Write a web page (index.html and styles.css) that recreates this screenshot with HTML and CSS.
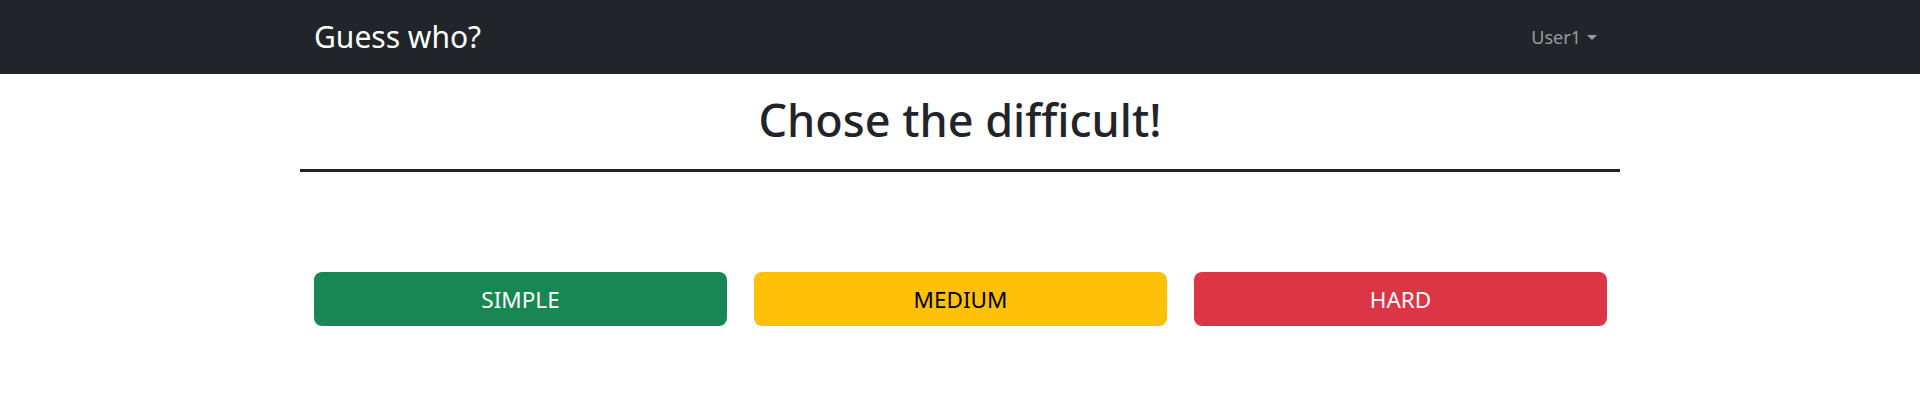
FILE: index.html
```html
<!DOCTYPE html>
<html lang="en">
<head>
<meta charset="utf-8">
<title>Guess who?</title>
<link rel="stylesheet" href="styles.css">
</head>
<body>
<nav class="navbar">
  <div class="nav-inner">
    <a class="brand" href="#">Guess who?</a>
    <a class="user" href="#">User1<span class="caret"></span></a>
  </div>
</nav>
<main class="main">
  <h1 class="title">Chose the difficult!</h1>
  <hr class="divider">
  <div class="levels">
    <div class="level"><button class="btn btn-simple">SIMPLE</button></div>
    <div class="level"><button class="btn btn-medium">MEDIUM</button></div>
    <div class="level"><button class="btn btn-hard">HARD</button></div>
  </div>
</main>
</body>
</html>
```
FILE: styles.css
```css
* { box-sizing: border-box; }
html, body { margin: 0; padding: 0; }
body {
  font-family: "Noto Sans", "Open Sans", sans-serif;
  background: #fff;
  color: #212529;
}
.navbar {
  background: #212529;
  height: 74px;
}
.nav-inner {
  width: 1320px;
  margin: 0 auto;
  height: 100%;
  padding: 0 14px;
  display: flex;
  align-items: center;
  justify-content: space-between;
}
.brand {
  color: #fff;
  text-decoration: none;
  font-size: 30px;
  line-height: 1;
}
.user {
  color: rgba(255,255,255,0.55);
  text-decoration: none;
  font-size: 18px;
  display: flex;
  align-items: center;
  margin-right: 9px;
}
.caret {
  display: inline-block;
  margin-left: 6px;
  border-top: 5px solid rgba(255,255,255,0.55);
  border-left: 5px solid transparent;
  border-right: 5px solid transparent;
}
.main {
  width: 1320px;
  margin: 0 auto;
}
.title {
  text-align: center;
  font-weight: 500;
  font-size: 45px;
  line-height: 1.2;
  margin: 0;
  padding-top: 19px;
}
.divider {
  border: 0;
  border-top: 3px solid #212529;
  margin: 22px 0 0;
}
.levels {
  display: grid;
  grid-template-columns: repeat(3, 1fr);
  margin-top: 100px;
}
.level {
  padding: 0 13px 0 14px;
}
.btn {
  width: 100%;
  height: 54px;
  border: 0;
  border-radius: 8px;
  font-family: inherit;
  font-size: 22.5px;
  color: #fff;
  cursor: pointer;
}
.btn-simple { background: #198754; }
.btn-medium { background: #ffc107; color: #000; }
.btn-hard { background: #dc3545; }
```
